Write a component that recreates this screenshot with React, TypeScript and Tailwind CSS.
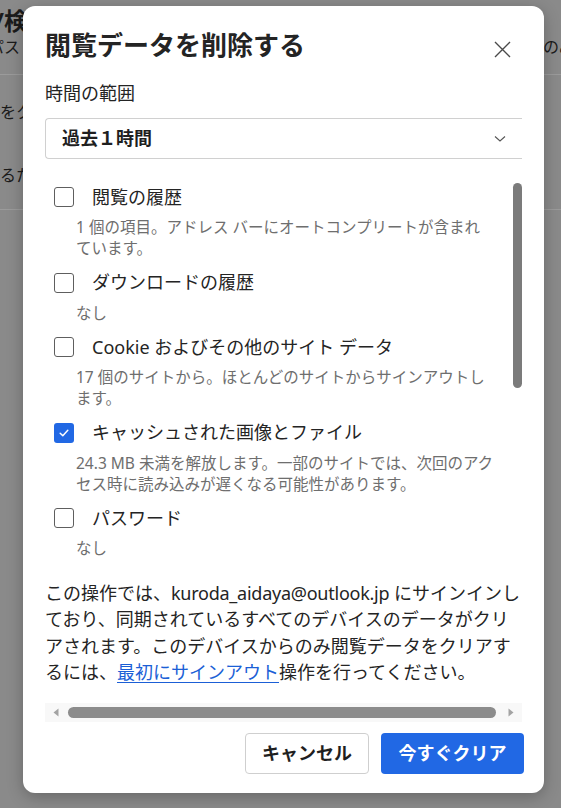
import React, { useState } from 'react'

interface Item {
  id: string
  label: string
  desc: string[]
  checked: boolean
}

const initialItems: Item[] = [
  { id: 'history', label: '閲覧の履歴', desc: ['1 個の項目。アドレス バーにオートコンプリートが含まれ', 'ています。'], checked: false },
  { id: 'downloads', label: 'ダウンロードの履歴', desc: ['なし'], checked: false },
  { id: 'cookies', label: 'Cookie およびその他のサイト データ', desc: ['17 個のサイトから。ほとんどのサイトからサインアウトし', 'ます。'], checked: false },
  { id: 'cache', label: 'キャッシュされた画像とファイル', desc: ['24.3 MB 未満を解放します。一部のサイトでは、次回のアク', 'セス時に読み込みが遅くなる可能性があります。'], checked: true },
  { id: 'passwords', label: 'パスワード', desc: ['なし'], checked: false },
]

function Checkbox({ checked, onChange }: { checked: boolean; onChange: () => void }){
  return (
    <button
      onClick={onChange}
      className={`w-[20px] h-[20px] rounded-[3px] flex items-center justify-center shrink-0 ${checked ? 'bg-[#2168e4]' : 'border border-[#5e5e5e] bg-white'}`}
    >
      {checked && (
        <svg width="12" height="12" viewBox="0 0 12 12" fill="none">
          <path d="M2.2 6.3 L4.8 8.8 L9.8 3.3" stroke="white" strokeWidth="1.5" strokeLinecap="round" strokeLinejoin="round" />
        </svg>
      )}
    </button>
  )
}

export default function App(){
  const [items, setItems] = useState<Item[]>(initialItems)

  const toggle = (id: string) => {
    setItems(items.map(i => i.id === id ? { ...i, checked: !i.checked } : i))
  }

  return (
    <div className="relative w-[561px] h-[808px] overflow-hidden bg-[#8a8a8a] text-[#1b1b1b] font-['Noto_Sans','Noto_Sans_CJK_JP',sans-serif]">
      {/* page behind the dialog */}
      <div className="flex flex-col">
        <div className="h-[75px] border-b border-[#9b9b9b] pt-[6px]">
          <div className="text-[24px] leading-[30px] font-bold whitespace-nowrap -ml-[6px]">/検索</div>
          <div className="flex justify-between text-[16px] leading-[22px] whitespace-nowrap">
            <span className="-ml-[12px]">パス</span>
            <span className="-mr-[14px]">のみ</span>
          </div>
        </div>
        <div className="h-[135px] border-b border-[#9b9b9b] text-[16px] whitespace-nowrap">
          <div className="mt-[25px]">をク</div>
          <div className="mt-[39px]">るた</div>
        </div>
      </div>

      {/* dialog */}
      <div className="absolute left-[23px] top-[6px] w-[521px] h-[787px] bg-white rounded-[12px] shadow-[0_4px_16px_rgba(0,0,0,0.25)] overflow-hidden flex flex-col pl-[22px] pr-[22px] pt-[22px]">
        <div className="flex items-start justify-between h-[34px]">
          <h2 className="text-[26px] leading-[34px] font-bold text-[#242424] whitespace-nowrap">閲覧データを削除する</h2>
          <button className="w-[18px] h-[18px] mt-[12px] mr-[11px] flex items-center justify-center">
            <svg width="17" height="17" viewBox="0 0 17 17" fill="none">
              <path d="M1 1 L16 16 M16 1 L1 16" stroke="#4a4a4a" strokeWidth="1.4" />
            </svg>
          </button>
        </div>

        <div className="mt-[19px] text-[18px] leading-[24px] text-[#242424]">時間の範囲</div>

        <div className="mt-[13px] h-[41px] border border-r-0 border-[#d0d0d0] rounded-l-[4px] flex items-center justify-between pl-[16px] pr-[16px]">
          <span className="text-[18px] font-bold text-[#1f1f1f]">過去１時間</span>
          <svg width="12" height="8" viewBox="0 0 12 8" fill="none" className="mt-[1px]">
            <path d="M1 1.5 L6 6 L11 1.5" stroke="#555" strokeWidth="1.1" />
          </svg>
        </div>

        {/* scrollable list */}
        <div className="mt-[17px] flex h-[404px]">
          <div className="flex-1 flex flex-col pl-[9px] pt-[6px] min-w-0">
            {items.map(item => (
              <div key={item.id} className="flex flex-col mb-[8.5px]">
                <label className="flex items-center h-[30px] gap-[18px] cursor-pointer">
                  <Checkbox checked={item.checked} onChange={() => toggle(item.id)} />
                  <span className="text-[18px] text-[#242424] whitespace-nowrap">{item.label}</span>
                </label>
                <p className="mt-[5px] pl-[22px] text-[15.5px] leading-[21px] text-[#6e6e6e] whitespace-nowrap">
                  {item.desc.map((line, i) => (
                    <React.Fragment key={i}>{i > 0 && <br />}{line}</React.Fragment>
                  ))}
                </p>
              </div>
            ))}
          </div>
          <div className="w-[9px] pt-[7px] shrink-0">
            <div className="w-[9px] h-[205px] rounded-full bg-[#7b7b7b]" />
          </div>
        </div>

        <p className="text-[18px] leading-[26.4px] text-[#242424] whitespace-nowrap">
          この操作では、<span className="tracking-[-0.25px]">kuroda_aidaya@outlook.jp</span> にサインインし<br />
          ており、同期されているすべてのデバイスのデータがクリ<br />
          アされます。このデバイスからのみ閲覧データをクリアす<br />
          るには、<a href="#" className="text-[#1b5fd6] underline underline-offset-[3px]">最初にサインアウト</a>操作を行ってください。
        </p>

        {/* horizontal scrollbar */}
        <div className="mt-[17px] h-[19px] bg-[#f8f8f8] flex items-center pl-[8px] pr-[8px]">
          <svg width="6" height="9" viewBox="0 0 6 9"><path d="M5.5 0.5 L5.5 8.5 L0.5 4.5 Z" fill="#a3a3a3" /></svg>
          <div className="flex-1 h-[11px] ml-[9px] mr-[12px] rounded-full bg-[#8c8c8c]" />
          <svg width="6" height="9" viewBox="0 0 6 9"><path d="M0.5 0.5 L0.5 8.5 L5.5 4.5 Z" fill="#a3a3a3" /></svg>
        </div>

        <div className="mt-[11px] flex justify-end gap-[12px] -mr-[2px]">
          <button className="w-[124px] h-[41px] border border-[#cfcfcf] rounded-[4px] text-[18px] font-bold text-[#1f1f1f] bg-white">キャンセル</button>
          <button className="w-[143px] h-[41px] rounded-[4px] text-[18px] font-bold text-white bg-[#2168e4]">今すぐクリア</button>
        </div>
      </div>
    </div>
  )
}
